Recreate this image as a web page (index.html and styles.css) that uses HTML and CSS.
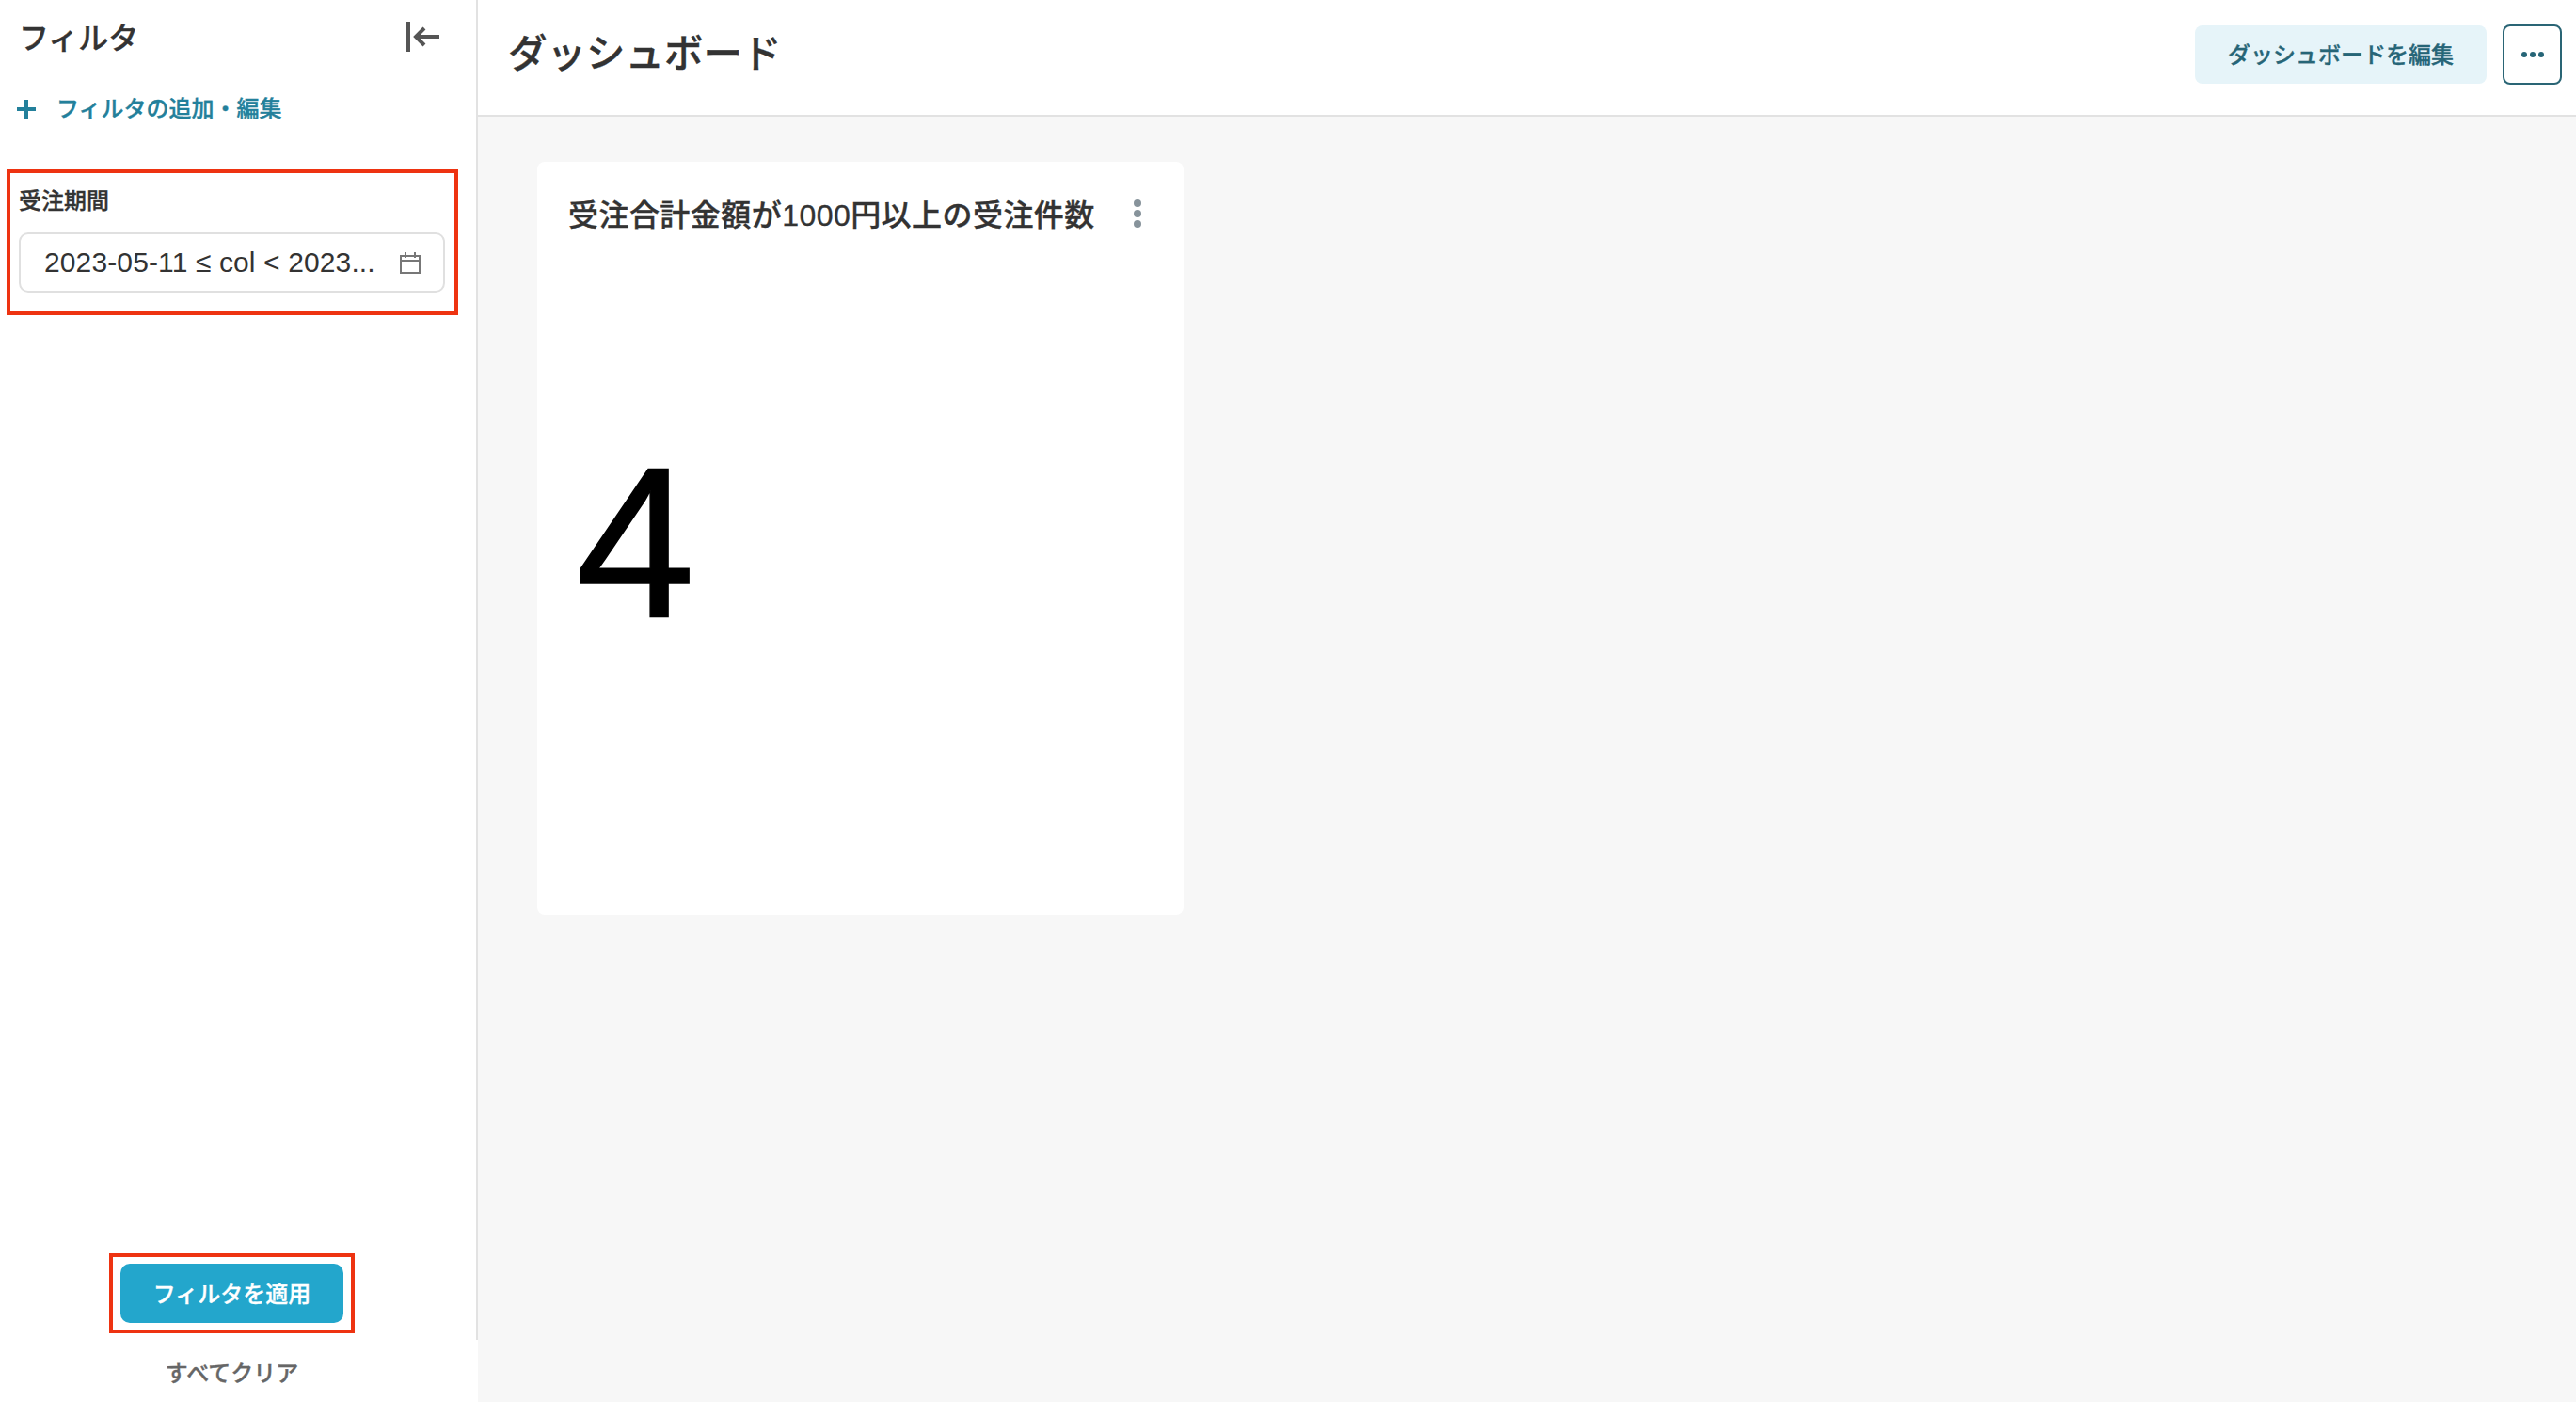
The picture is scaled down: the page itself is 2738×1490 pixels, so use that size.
FILE: index.html
```html
<!DOCTYPE html>
<html lang="ja">
<head>
    <meta charset="UTF-8">
    <meta name="viewport" content="width=device-width, initial-scale=1.0">
    <link rel="stylesheet" href="styles.css">
    <title>ダッシュボード</title>
</head>
<body>
    <div class="page">
        <aside class="sidebar">
            <div class="sidebar-body">
                <div class="sidebar-head">
                    <h2 class="sidebar-title">フィルタ</h2>
                    <svg class="collapse-icon" width="36" height="34" viewBox="0 0 36 34">
                        <path d="M2 1v32" stroke="#555" stroke-width="4" fill="none"/>
                        <path d="M35 17H11M19 8l-9 9 9 9" stroke="#555" stroke-width="4" fill="none"/>
                    </svg>
                </div>
                <div class="add-filter">
                    <svg width="20" height="20" viewBox="0 0 20 20">
                        <path d="M10 0v20M0 10h20" stroke="#23809b" stroke-width="4" fill="none"/>
                    </svg>
                    <span>フィルタの追加・編集</span>
                </div>
                <div class="filter-box">
                    <label class="filter-label">受注期間</label>
                    <div class="filter-input">
                        <span class="filter-value">2023-05-11 ≤ col &lt; 2023...</span>
                        <svg width="24" height="24" viewBox="0 0 24 24">
                            <path d="M2 5h20v18H2zM2 10h20M7 1v6M17 1v6" stroke="#777" stroke-width="2" fill="none"/>
                        </svg>
                    </div>
                </div>
                <div class="apply-wrap">
                    <div class="apply-box">
                        <button class="apply-btn">フィルタを適用</button>
                    </div>
                </div>
            </div>
            <div class="sidebar-foot">すべてクリア</div>
        </aside>
        <main class="main">
            <header class="topbar">
                <h1 class="page-title">ダッシュボード</h1>
                <div class="topbar-actions">
                    <button class="edit-btn">ダッシュボードを編集</button>
                    <button class="more-btn">
                        <svg width="24" height="6" viewBox="0 0 24 6">
                            <circle cx="3" cy="3" r="3" fill="#266577"/>
                            <circle cx="12" cy="3" r="3" fill="#266577"/>
                            <circle cx="21" cy="3" r="3" fill="#266577"/>
                        </svg>
                    </button>
                </div>
            </header>
            <section class="content">
                <div class="card">
                    <div class="card-head">
                        <h3 class="card-title">受注合計金額が1000円以上の受注件数</h3>
                        <svg width="10" height="32" viewBox="0 0 10 32">
                            <circle cx="5" cy="5" r="4" fill="#87939b"/>
                            <circle cx="5" cy="16" r="4" fill="#87939b"/>
                            <circle cx="5" cy="27" r="4" fill="#87939b"/>
                        </svg>
                    </div>
                    <div class="card-value">4</div>
                </div>
            </section>
        </main>
    </div>
</body>
</html>
```

FILE: styles.css
```css
body {
    font-family: "Liberation Sans", "Noto Sans CJK JP", sans-serif;
    background-color: #fff;
    color: #333;
    margin: 0;
    padding: 0;
}

h1, h2, h3 {
    margin: 0;
}

button {
    font-family: inherit;
    cursor: pointer;
}

/* the medium weight alone comes out a little thin */
.sidebar-title, .add-filter, .filter-label, .apply-btn, .sidebar-foot,
.page-title, .edit-btn, .card-title {
    font-weight: 500;
    -webkit-text-stroke: 0.35px;
}

.page {
    display: flex;
    height: 1490px;
}

/* sidebar */
.sidebar {
    width: 508px;
    flex-shrink: 0;
    display: flex;
    flex-direction: column;
}

.sidebar-body {
    flex: 1;
    display: flex;
    flex-direction: column;
    border-right: 2px solid #e2e2e2;
}

.sidebar-head {
    display: flex;
    justify-content: space-between;
    align-items: center;
    height: 78px;
    padding-left: 20px;
    padding-right: 38px;
}

.sidebar-title {
    font-size: 32px;
    margin-bottom: 3px;
}

.add-filter {
    display: flex;
    align-items: center;
    gap: 22px;
    margin-top: 22px;
    padding-left: 18px;
    font-size: 24px;
    line-height: 32px;
    color: #23809b;
}

.filter-box {
    margin: 48px 0 0 7px;
    width: 480px;
    height: 155px;
    box-sizing: border-box;
    border: 4px solid #ee3311;
    padding: 15px 10px 0 9px;
}

.filter-label {
    display: block;
    font-size: 24px;
    line-height: 30px;
}

.filter-input {
    display: flex;
    align-items: center;
    justify-content: space-between;
    margin-top: 18px;
    height: 64px;
    box-sizing: border-box;
    border: 2px solid #e0e0e0;
    border-radius: 10px;
    padding: 0 23px 0 25px;
}

.filter-value {
    font-size: 30px;
    letter-spacing: 0.12px;
    white-space: nowrap;
}

.apply-wrap {
    margin-top: auto;
    margin-bottom: 7px;
    padding-right: 13px;
    display: flex;
    justify-content: center;
}

.apply-box {
    border: 4px solid #ee3311;
    padding: 7px 8px;
    width: 261px;
    height: 85px;
    box-sizing: border-box;
}

.apply-btn {
    display: block;
    width: 100%;
    height: 100%;
    padding: 0 0 3px;
    border: none;
    border-radius: 10px;
    background-color: #23a6cc;
    color: #fff;
    font-size: 24px;
}

.sidebar-foot {
    height: 66px;
    display: flex;
    align-items: center;
    justify-content: center;
    padding-right: 15px;
    font-size: 24px;
    color: #666;
}

/* main */
.main {
    flex: 1;
    display: flex;
    flex-direction: column;
    background-color: #f7f7f7;
}

.topbar {
    display: flex;
    justify-content: space-between;
    align-items: center;
    height: 124px;
    box-sizing: border-box;
    background-color: #fff;
    border-bottom: 2px solid #e2e2e2;
    padding: 0 15px 6px 32px;
}

.page-title {
    font-size: 41.5px;
    margin-bottom: 8px;
}

.topbar-actions {
    display: flex;
    align-items: center;
    gap: 17px;
}

.edit-btn {
    width: 310px;
    height: 62px;
    padding: 0 0 4px;
    border: none;
    border-radius: 8px;
    background-color: #e6f4f9;
    color: #266577;
    font-size: 24px;
}

.more-btn {
    display: flex;
    align-items: center;
    justify-content: center;
    width: 63px;
    height: 64px;
    padding: 0;
    border: 2px solid #2a6575;
    border-radius: 8px;
    background-color: #fff;
}

.content {
    flex: 1;
    padding: 48px 0 0 63px;
}

.card {
    width: 687px;
    height: 800px;
    box-sizing: border-box;
    background-color: #fff;
    border-radius: 8px;
    padding: 33px 44px 0 33px;
}

.card-head {
    display: flex;
    justify-content: space-between;
    align-items: center;
    height: 44px;
}

.card-title {
    font-size: 32px;
    white-space: nowrap;
    letter-spacing: 0.45px;
    margin-top: -2px;
}

.card-value {
    margin-top: 138px;
    padding-left: 8px;
    font-size: 228px;
    line-height: 380px;
    color: #000;
    -webkit-text-stroke: 1.5px #000;
}
```
